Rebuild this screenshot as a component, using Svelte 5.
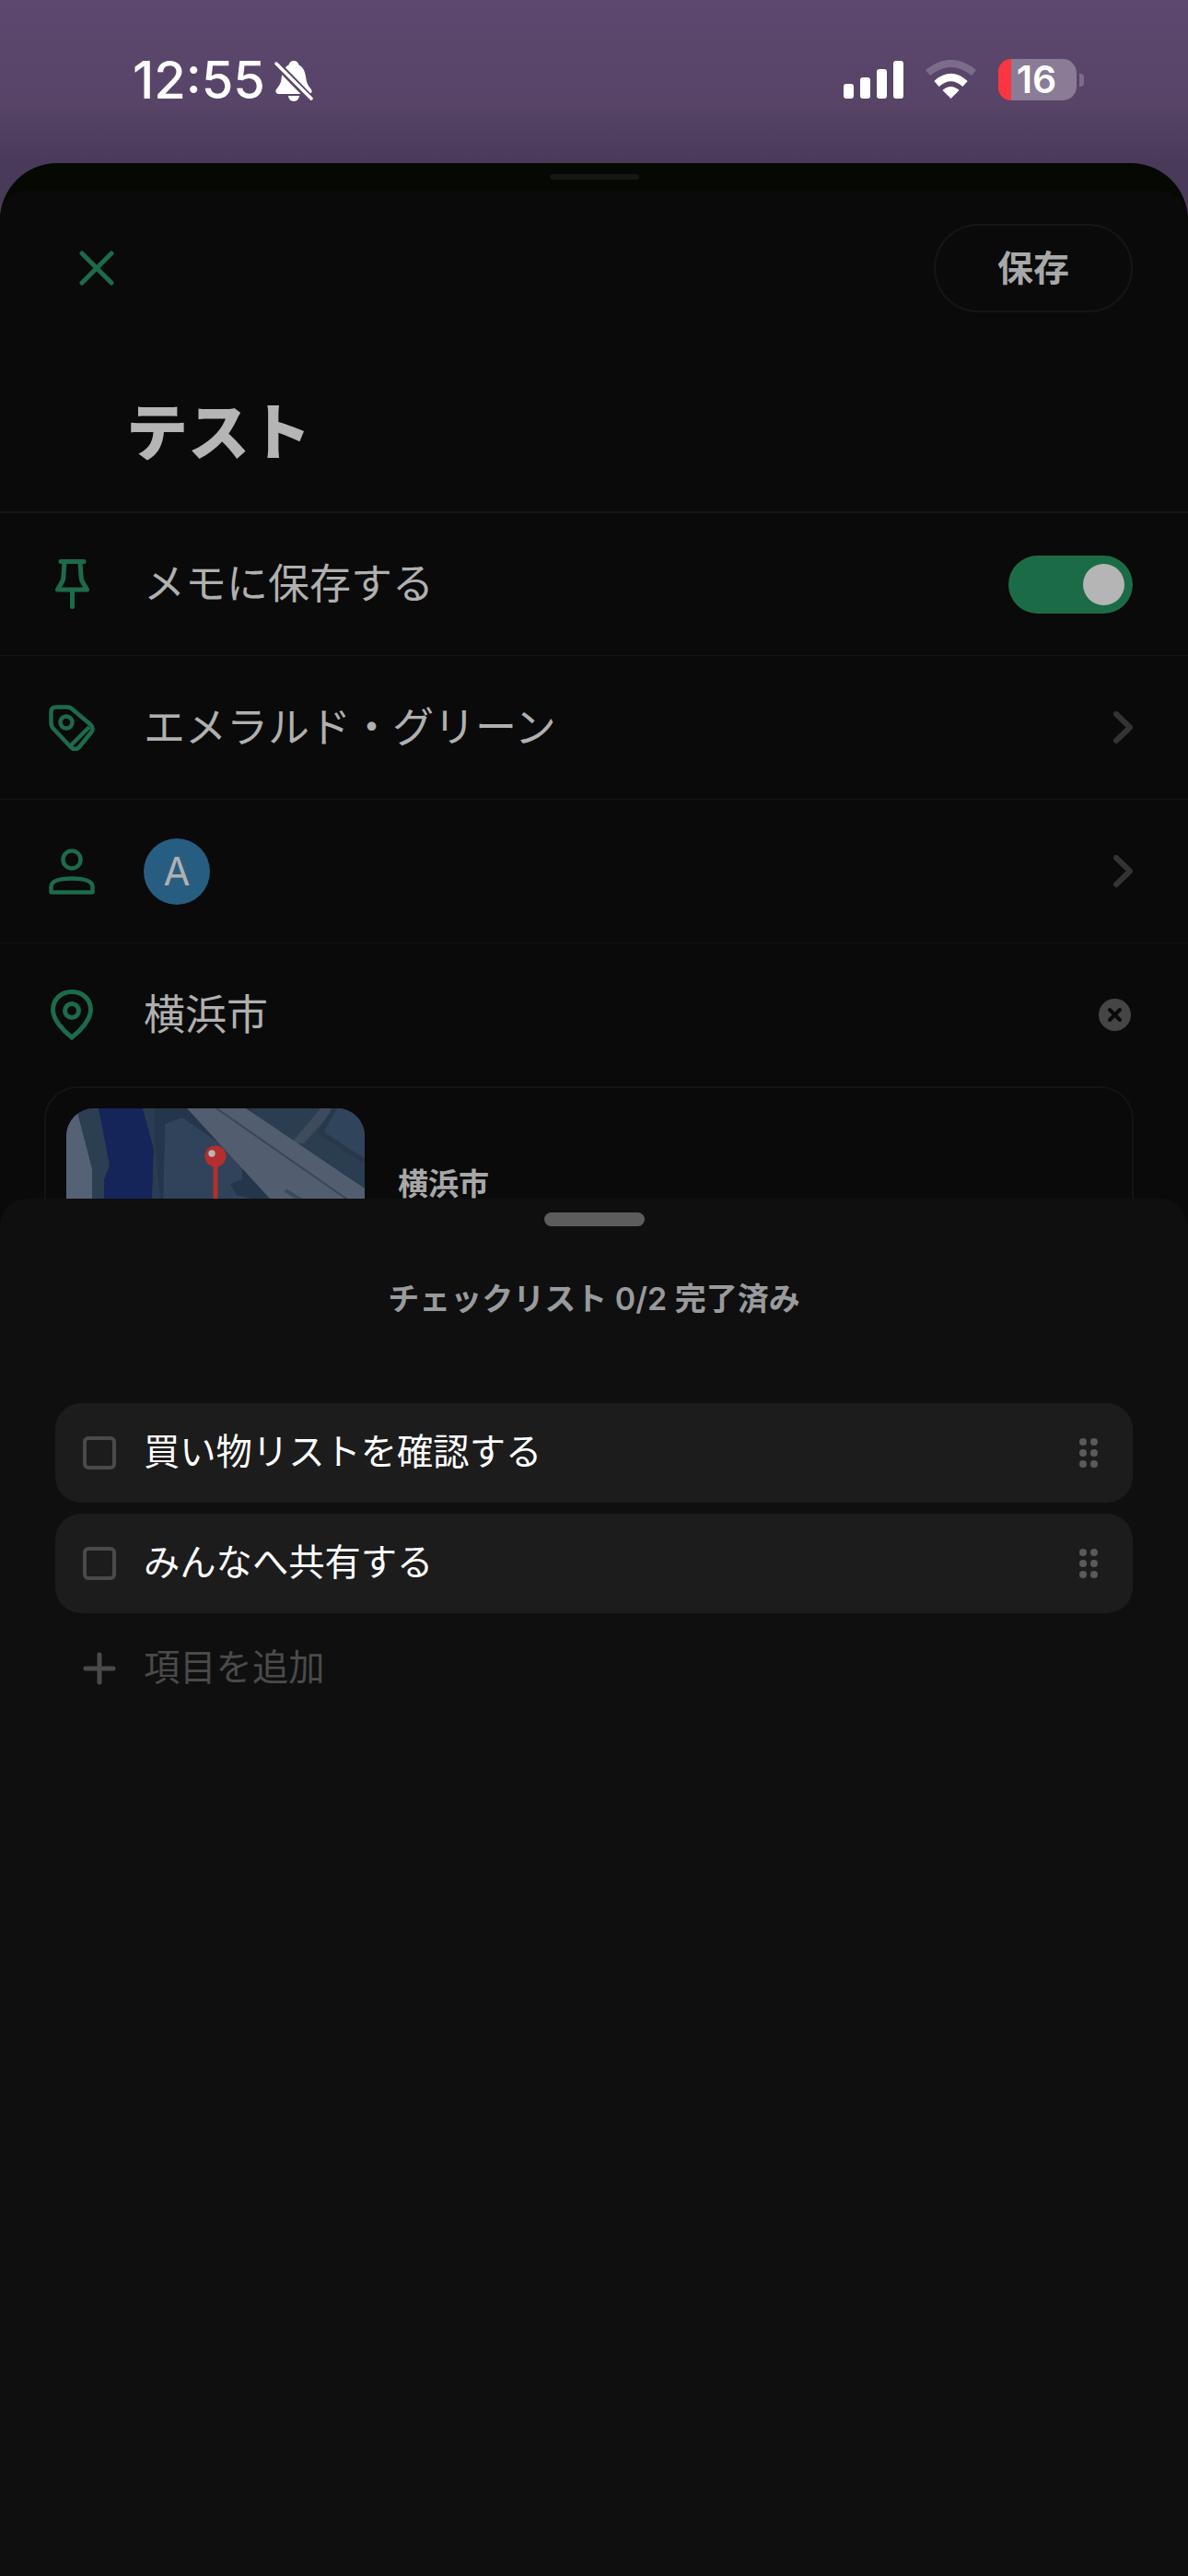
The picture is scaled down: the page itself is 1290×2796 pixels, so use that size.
<script>
  const items = ['買い物リストを確認する', 'みんなへ共有する'];
  const signalBars = [16, 23, 32, 41];
  const dots = [
    [4, 4], [16, 4],
    [4, 16], [16, 16],
    [4, 28], [16, 28]
  ];
</script>

<div class="screen">
  <header class="status">
    <div class="status-left">
      <span class="time">12:55</span>
      <svg class="bell" viewBox="0 0 42 44" width="42" height="44">
        <path fill="#fff" d="M21 0C24 0 26 2 26.500 4.500C32 7 33.500 13 34.500 20C35 25 38 28.500 40 31C41.500 33.500 40 36 37 36H5C2 36 .5 33.500 2 31C4 28.500 7 25 7.500 20C8.500 13 10 7 15.500 4.500C16 2 18 0 21 0Z"/>
        <path fill="#fff" d="M15 38H27A6 6 0 0 1 15 38Z"/>
        <path stroke="#584568" stroke-width="8" d="M1 2L40 42"/>
        <path stroke="#fff" stroke-width="3.500" stroke-linecap="round" d="M2 3L40 41"/>
      </svg>
    </div>
    <div class="status-right">
      <div class="signal">
        {#each signalBars as h}
          <span style="height: {h}px"></span>
        {/each}
      </div>
      <svg class="wifi" viewBox="0 0 57 42" width="57" height="42" fill="none">
        <path stroke="#7b6c8c" stroke-width="8" d="M3.500 14Q28.500 -6 53.500 14"/>
        <path stroke="#fff" stroke-width="8" d="M13 26Q28.500 12 44 26"/>
        <path fill="#fff" d="M28.500 42L19.500 33Q28.500 25 37.500 33Z"/>
      </svg>
      <div class="battery">
        <div class="cell">
          <span class="level"></span>
          <span class="percent">16</span>
        </div>
        <span class="nub"></span>
      </div>
    </div>
  </header>

  <section class="sheet">
    <div class="grip"></div>
    <div class="body">
      <div class="toolbar">
        <svg class="close" viewBox="0 0 38 38" width="38" height="38" fill="none" stroke="#1c6b4a" stroke-width="5" stroke-linecap="round">
          <path d="M3 3L35 35M35 3L3 35"/>
        </svg>
        <button class="save">保存</button>
      </div>

      <h1 class="title">テスト</h1>

      <div class="row first">
        <svg class="icon" viewBox="0 0 37 54" width="37" height="54" fill="none" stroke="#1c6b4a" stroke-width="5" stroke-linecap="round" stroke-linejoin="round">
          <path d="M6 2.500H31M10 3L9 18Q9 23 6 27L2.500 33H34.500L31 27Q28 23 28 18L27 3M18.500 34V51.500"/>
        </svg>
        <span class="label">メモに保存する</span>
        <span class="toggle"><span class="knob"></span></span>
      </div>

      <div class="row">
        <svg class="icon" viewBox="0 0 50 50" width="50" height="50" fill="none" stroke="#1c6b4a" stroke-width="4.500" stroke-linejoin="round">
          <path d="M8 2.500H20Q24 2.500 27 6L46 22Q49 26 46 30L33 46Q28.500 50 24 46L6 27Q2.500 24 2.500 19.500V8Q2.500 2.500 8 2.500Z"/>
          <circle cx="19" cy="19" r="6.500"/>
          <path d="M44 24L24 44"/>
        </svg>
        <span class="label">エメラルド・グリーン</span>
        <svg class="chevron" viewBox="0 0 21 35" width="21" height="35" fill="none" stroke="#333" stroke-width="6" stroke-linecap="round" stroke-linejoin="round">
          <path d="M3 3L18 17.500L3 32"/>
        </svg>
      </div>

      <div class="row">
        <svg class="icon" viewBox="0 0 50 50" width="50" height="50" fill="none" stroke="#1c6b4a" stroke-width="4.500" stroke-linejoin="round">
          <circle cx="25" cy="12" r="9.500"/>
          <path d="M2.500 47.500V42Q2.500 32.500 25 32.500Q47.500 32.500 47.500 42V47.500Z"/>
        </svg>
        <span class="avatar">A</span>
        <svg class="chevron" viewBox="0 0 21 35" width="21" height="35" fill="none" stroke="#333" stroke-width="6" stroke-linecap="round" stroke-linejoin="round">
          <path d="M3 3L18 17.500L3 32"/>
        </svg>
      </div>

      <div class="row">
        <svg class="icon" viewBox="0 0 46 55" width="46" height="55" fill="none" stroke="#1c6b4a" stroke-width="5">
          <path d="M23 2.500C11 2.500 2.500 11 2.500 22C2.500 33 14 45 23 52C32 45 43.500 33 43.500 22C43.500 11 35 2.500 23 2.500Z"/>
          <circle cx="23" cy="23" r="7.500"/>
        </svg>
        <span class="label">横浜市</span>
        <svg class="clear" viewBox="0 0 35 35" width="35" height="35">
          <circle cx="17.500" cy="17.500" r="17.500" fill="#454545"/>
          <path d="M12 12L23 23M23 12L12 23" stroke="#0a0a0a" stroke-width="4" stroke-linecap="round"/>
        </svg>
      </div>

      <div class="place">
        <!-- small static map of the saved place -->
        <svg class="map" viewBox="0 0 324 160" width="324" height="160">
          <rect width="324" height="160" fill="#24354c"/>
          <path fill="#2b3d51" d="M200 0H324V90L200 20Z"/>
          <path fill="#556175" d="M0 0H11L28 65V160H0Z"/>
          <path fill="#2c3e52" d="M11 0H40L50 98H28L28 65Z"/>
          <path fill="#15255a" d="M35 0H83L95 44L91 160H41V77L47 62Z"/>
          <path fill="#2a3c52" d="M83 0H96V38L108 160H91L95 44Z"/>
          <path fill="#30435a" d="M107 17L126 10L191 55V77L178 82L185 94L201 98L215 160H104Z"/>
          <path fill="#3d4b5c" d="M276 0H292L258 38H244Z"/>
          <path fill="#30445c" d="M293 0H324V54L278 27Z"/>
          <path fill="none" stroke="#283848" stroke-width="5" d="M293 -3L276 26L324 58"/>
          <path fill="#535d70" d="M131 0H195L324 87V160H278Z"/>
          <path fill="none" stroke="#3a4558" stroke-width="2" d="M163 0L324 112"/>
          <path fill="none" stroke="#3a4a60" stroke-width="4" d="M238 89L262 104"/>
          <path fill="none" stroke="#b52e2e" stroke-width="5" d="M162 60V160"/>
          <circle cx="162" cy="52" r="11.500" fill="#b52e2e"/>
          <circle cx="158" cy="49" r="3.700" fill="#b8b8b8"/>
        </svg>
        <span class="place-name">横浜市</span>
      </div>
    </div>
  </section>

  <!-- checklist drawer sits over the form -->
  <section class="drawer">
    <div class="drawer-grip"></div>
    <h2 class="progress">チェックリスト 0/2 完了済み</h2>
    <ul class="list">
      {#each items as item}
        <li class="item">
          <span class="check"></span>
          <span class="item-text">{item}</span>
          <svg class="drag" viewBox="0 0 20 32" width="20" height="32">
            {#each dots as [cx, cy]}
              <circle {cx} {cy} r="4" fill="#5a5a5a"/>
            {/each}
          </svg>
        </li>
      {/each}
    </ul>
    <div class="add">
      <svg viewBox="0 0 36 36" width="36" height="36" stroke="#4a4a4a" stroke-width="5" stroke-linecap="round">
        <path d="M18 3V33M3 18H33"/>
      </svg>
      <span class="add-text">項目を追加</span>
    </div>
  </section>
</div>

<style>
  :global(body) {
    background: #0f0f0f;
  }

  .screen {
    position: relative;
    width: 1290px;
    height: 2796px;
    overflow: hidden;
    display: flex;
    flex-direction: column;
    background: linear-gradient(#5d486f, #574467 110px, #4a3a59 177px, #4a3a59 240px);
    font-family: Inter, "Noto Sans CJK JP", sans-serif;
  }

  /* status bar */
  .status {
    height: 177px;
    flex: none;
    display: flex;
    justify-content: space-between;
    padding: 64px 113px 0 144px;
    box-sizing: border-box;
    color: #fff;
  }
  .status-left {
    display: flex;
    align-items: flex-start;
    gap: 10px;
    height: 46px;
  }
  .time {
    font-size: 56px;
    line-height: 46px;
    font-weight: 500;
    letter-spacing: 0;
  }
  .bell {
    margin-top: 2px;
  }
  .status-right {
    display: flex;
    align-items: flex-start;
    height: 46px;
  }
  .signal {
    display: flex;
    align-items: flex-end;
    gap: 7px;
    height: 43px;
    margin-right: 23px;
  }
  .signal span {
    width: 11px;
    background: #fff;
    border-radius: 3px;
  }
  .wifi {
    margin: 1px 23px 0 0;
  }
  .battery {
    display: flex;
    align-items: center;
    gap: 3px;
  }
  .cell {
    position: relative;
    width: 85px;
    height: 45px;
    border-radius: 15px;
    background: #8a7b97;
    display: flex;
    justify-content: center;
    align-items: center;
  }
  .level {
    position: absolute;
    left: 0;
    top: 0;
    bottom: 0;
    width: 14px;
    border-radius: 15px 0 0 15px;
    background: #fb3640;
  }
  .percent {
    position: relative;
    font-size: 41px;
    font-weight: 600;
    line-height: 45px;
    margin-right: 2px;
  }
  .nub {
    width: 5px;
    height: 14px;
    background: #7b6c8c;
    border-radius: 0 4px 4px 0;
  }

  /* form sheet */
  .sheet {
    flex: 1;
    background: #060802;
    border-radius: 62px 62px 0 0;
    overflow: hidden;
    display: flex;
    flex-direction: column;
  }
  .grip {
    width: 97px;
    height: 6px;
    margin: 12px auto;
    border-radius: 3px;
    background: #151712;
  }
  .body {
    flex: 1;
    background: #0a0a0a;
    border-radius: 28px 28px 0 0;
    padding-top: 36px;
  }
  .toolbar {
    display: flex;
    justify-content: space-between;
    align-items: center;
    padding: 0 60px 0 86px;
  }
  .save {
    width: 216px;
    height: 96px;
    border: 2px solid #161616;
    border-radius: 48px;
    padding: 0 0 6px;
    background: none;
    color: #a8a8a8;
    font-family: inherit;
    font-size: 39px;
    font-weight: 700;
  }
  .title {
    margin: 0;
    height: 216px;
    padding: 34px 0 0 137px;
    box-sizing: border-box;
    display: flex;
    align-items: center;
    color: #b5b5b5;
    font-size: 67px;
    font-weight: 900;
  }
  .row {
    height: 156px;
    box-sizing: border-box;
    border-top: 1px solid #141414;
    display: grid;
    grid-template-columns: 50px 1fr auto;
    column-gap: 53px;
    align-items: center;
    padding: 0 60px 0 53px;
  }
  .row.first {
    border-top: 2px solid #161616;
  }
  .icon {
    justify-self: center;
  }
  .label {
    color: #b0b0b0;
    font-size: 45px;
    line-height: 1.2;
  }
  .toggle {
    width: 135px;
    height: 63px;
    border-radius: 32px;
    background: #1c6b47;
    display: flex;
    justify-content: flex-end;
    align-items: center;
    padding-right: 9px;
    box-sizing: border-box;
  }
  .knob {
    width: 45px;
    height: 45px;
    border-radius: 50%;
    background: #b5b5b5;
  }
  .avatar {
    width: 72px;
    height: 72px;
    border-radius: 50%;
    background: #285d82;
    color: #b0b0b0;
    font-size: 42px;
    display: flex;
    justify-content: center;
    align-items: center;
  }
  .clear {
    margin-right: 2px;
  }
  .place {
    margin: 0 59px 0 48px;
    padding: 22px;
    border: 2px solid #141414;
    border-radius: 36px;
    display: flex;
    align-items: center;
    gap: 36px;
  }
  .map {
    flex: none;
    border-radius: 30px;
  }
  .place-name {
    color: #a8a8a8;
    font-size: 33px;
    font-weight: 700;
  }

  /* checklist drawer */
  .drawer {
    position: absolute;
    left: 0;
    right: 0;
    top: 1301px;
    bottom: 0;
    background: #0f0f0f;
    border-radius: 30px 30px 0 0;
    padding-top: 15px;
  }
  .drawer-grip {
    width: 109px;
    height: 15px;
    margin: 0 auto;
    border-radius: 8px;
    background: #5c5c5c;
  }
  .progress {
    margin: 58px 0 0;
    text-align: center;
    color: #999a9d;
    font-size: 34px;
    line-height: 42px;
    font-weight: 600;
  }
  .list {
    list-style: none;
    margin: 92px 60px 0;
    padding: 0;
    display: flex;
    flex-direction: column;
    gap: 12px;
  }
  .item {
    height: 108px;
    border-radius: 28px;
    background: #1c1c1c;
    display: flex;
    align-items: center;
    padding: 0 38px 0 30px;
  }
  .check {
    width: 36px;
    height: 36px;
    box-sizing: border-box;
    border: 4px solid #4a4a4a;
    border-radius: 6px;
    margin-right: 30px;
  }
  .item-text {
    flex: 1;
    color: #fff;
    font-size: 39.3px;
    line-height: 44px;
    padding-bottom: 2px;
  }
  .add {
    height: 72px;
    margin: 24px 60px 0;
    padding-left: 30px;
    display: flex;
    align-items: center;
    gap: 30px;
  }
  .add-text {
    color: #4a4a4a;
    font-size: 39.3px;
    line-height: 44px;
    padding-bottom: 2px;
  }
</style>
